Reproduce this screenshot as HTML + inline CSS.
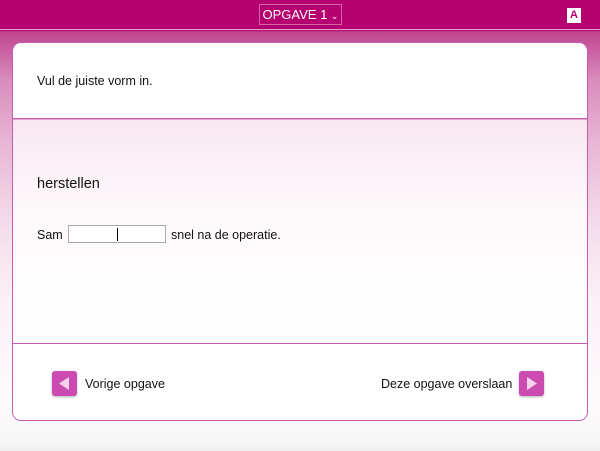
<!DOCTYPE html>
<html><head><meta charset="utf-8"><style>
*{margin:0;padding:0;box-sizing:border-box}
body{width:600px;height:451px;overflow:hidden;font-family:"Liberation Sans",sans-serif;font-size:12.5px;color:#111;position:relative;
background:linear-gradient(180deg,#b5006f 0,#b5006f 30px,#c0458f 32px,#d98cbd 80px,#e8b4d3 140px,#f5dbea 220px,#fbf0f6 300px,#fdfafc 400px,#f8f7f8 441px,#f1f0f1 451px);}
.top{position:absolute;left:0;top:0;width:600px;height:30px;background:#b5006f;border-bottom:1px solid #e3a0c8}
.sel{position:absolute;left:259px;top:4px;width:83px;height:21px;border:1px solid #d064a6;color:#fff;font-size:13px;line-height:19px;text-align:center}
.a{position:absolute;left:567px;top:8px;width:14px;height:15px;background:#fff;color:#b5006f;font-weight:bold;font-size:11px;line-height:15px;text-align:center}
.card{position:absolute;left:12px;top:42px;width:576px;height:379px;border:1px solid #c55cb2;border-radius:9px;overflow:hidden}
.s1{position:absolute;left:0;top:0;width:100%;height:76px;background:#fff;border-bottom:1px solid #c55cb2}
.s2{position:absolute;left:0;top:77px;width:100%;height:224px;background:linear-gradient(180deg,rgba(255,255,255,.72),rgba(255,255,255,.85) 120px,rgba(255,255,255,.95));border-bottom:1px solid #c55cb2}
.s3{position:absolute;left:0;top:301px;width:100%;height:78px;background:#fff}
.t{position:absolute}
.inp{position:absolute;left:55px;top:183px;width:98px;height:18px;border:1px solid #aaa;background:#fff}
.inp i{position:absolute;left:48px;top:2px;width:1px;height:13px;background:#000}
.btn{position:absolute;width:25px;height:25px;background:#cc4bb0;border-radius:3px;box-shadow:0 1px 2px rgba(0,0,0,.3)}
</style></head><body>
<div class="top"><div class="sel">OPGAVE 1 <span style="font-size:9px">⌄</span></div><div class="a">A</div></div>
<div class="card">
<div class="s1"><div class="t" style="left:24px;top:31px">Vul de juiste vorm in.</div></div>
<div class="s2">
<div class="t" style="left:24px;top:56px;font-size:14.5px">herstellen</div>
<div class="t" style="left:24px;top:108px">Sam</div>
<div class="inp" style="top:105px"><i></i></div>
<div class="t" style="left:158px;top:108px">snel na de operatie.</div>
</div>
<div class="s3">
<div class="btn" style="left:39px;top:27px"><svg width="25" height="25"><polygon points="17,6 17,19 7,12.5" fill="#f3d3ec"/></svg></div>
<div class="t" style="left:72px;top:33px">Vorige opgave</div>
<div class="t" style="left:368px;top:33px">Deze opgave overslaan</div>
<div class="btn" style="left:506px;top:27px"><svg width="25" height="25"><polygon points="8,6 8,19 18,12.5" fill="#f3d3ec"/></svg></div>
</div>
</div>
</body></html>
